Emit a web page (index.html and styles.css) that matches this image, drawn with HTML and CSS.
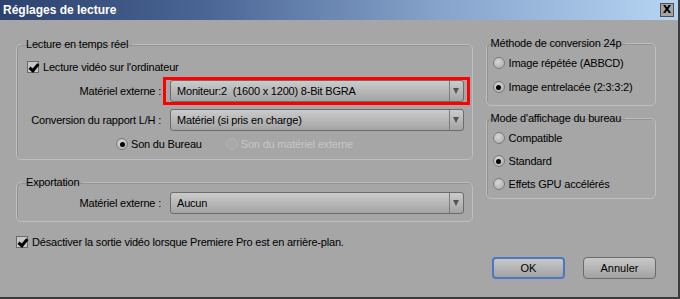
FILE: index.html
```html
<!DOCTYPE html>
<html lang="fr">
<head>
  <meta charset="UTF-8" />
  <title>Réglages de lecture</title>
  <link rel="stylesheet" href="styles.css">
</head>
<body>
  <div class="dialog">
    <div class="titlebar">
      <span class="title">Réglages de lecture</span>
      <span class="close">X</span>
    </div>
    <div class="content">
      <div class="columns">
        <div class="left">
          <fieldset class="group realtime">
            <legend>Lecture en temps réel</legend>
            <label class="check first"><span class="box on"></span>Lecture vidéo sur l'ordinateur</label>
            <div class="row">
              <span class="label">Matériel externe :</span>
              <div class="select highlight"><span class="value">Moniteur:2&nbsp; (1600 x 1200) 8-Bit BGRA</span><span class="arrow"></span></div>
            </div>
            <div class="row second">
              <span class="label">Conversion du rapport L/H :</span>
              <div class="select"><span class="value">Matériel (si pris en charge)</span><span class="arrow"></span></div>
            </div>
            <div class="radios">
              <label class="radio"><span class="dot on"></span>Son du Bureau</label>
              <label class="radio disabled"><span class="dot"></span>Son du matériel externe</label>
            </div>
          </fieldset>
          <fieldset class="group export">
            <legend>Exportation</legend>
            <div class="row">
              <span class="label">Matériel externe :</span>
              <div class="select"><span class="value">Aucun</span><span class="arrow"></span></div>
            </div>
          </fieldset>
        </div>
        <div class="right">
          <fieldset class="group side conversion">
            <legend>Méthode de conversion 24p</legend>
            <label class="radio"><span class="dot"></span>Image répétée (ABBCD)</label>
            <label class="radio"><span class="dot on"></span>Image entrelacée (2:3:3:2)</label>
          </fieldset>
          <fieldset class="group side desktop">
            <legend>Mode d'affichage du bureau</legend>
            <label class="radio"><span class="dot"></span>Compatible</label>
            <label class="radio"><span class="dot on"></span>Standard</label>
            <label class="radio"><span class="dot"></span>Effets GPU accélérés</label>
          </fieldset>
        </div>
      </div>
      <label class="check background"><span class="box on"></span>Désactiver la sortie vidéo lorsque Premiere Pro est en arrière-plan.</label>
      <div class="buttons">
        <button class="btn default">OK</button>
        <button class="btn">Annuler</button>
      </div>
    </div>
  </div>
</body>
</html>
```

FILE: styles.css
```css
* {
  box-sizing: border-box;
}

body {
  margin: 0;
  font-family: "Liberation Sans", Arial, sans-serif;
  font-size: 11px;
  letter-spacing: -0.2px;
  color: #000;
}

.dialog {
  width: 680px;
  height: 299px;
  background: #a6a6a6;
  border-right: 2px solid #3c3c3c;
  border-bottom: 2px solid #3c3c3c;
  display: flex;
  flex-direction: column;
}

.titlebar {
  height: 20px;
  background: linear-gradient(90deg, #2c416e 0%, #4a6594 30%, #86a4cc 65%, #b6d4f2 100%);
  display: flex;
  align-items: center;
  justify-content: space-between;
  padding: 0 4px 0 3px;
}

.title {
  color: #fff;
  font-weight: bold;
  font-size: 12px;
  letter-spacing: 0;
}

.close {
  width: 14px;
  height: 14px;
  background: #a4a4a4;
  border: 1px solid #505050;
  font-family: "DejaVu Sans", sans-serif;
  font-weight: bold;
  font-size: 11px;
  line-height: 12px;
  text-align: center;
}

.content {
  padding: 18px 22px 0 16px;
  display: flex;
  flex-direction: column;
}

.columns {
  display: flex;
  gap: 13px;
}

.left {
  width: 458px;
}

.right {
  width: 171px;
  margin-top: -1px;
}

.group {
  margin: 0;
  min-width: 0;
  border: 1px solid #bebebe;
  border-radius: 5px;
  box-shadow: inset 1px 1px 0 #939393;
  padding: 0 8px 8px 11px;
}

.group legend {
  padding: 0 4px;
  margin-left: -6px;
  line-height: 13px;
}

.check {
  display: flex;
  align-items: center;
  gap: 4px;
  height: 14px;
}

.box {
  width: 12px;
  height: 12px;
  border: 1px solid #6a6a6a;
  background: #c6c6c6;
  position: relative;
}

.box.on::after {
  content: "";
  position: absolute;
  left: 3px;
  top: 0;
  width: 3px;
  height: 7px;
  border-right: 3px solid #000;
  border-bottom: 3px solid #000;
  transform: rotate(40deg);
}

.realtime .first {
  margin: 9px 0 0 -1px;
}

.row {
  display: flex;
  align-items: center;
  margin-top: 6px;
}

.row.second {
  margin-top: 7px;
}

.label {
  width: 133px;
  text-align: right;
  white-space: nowrap;
  margin-right: 9px;
}

.select {
  flex: 1;
  display: flex;
  height: 22px;
  border: 1px solid #6c6c6c;
  border-radius: 3px;
  background: linear-gradient(#cbcbcb, #a4a4a4);
}

.select .value {
  flex: 1;
  padding-left: 6px;
  line-height: 20px;
}

.select .arrow {
  width: 14px;
  border-left: 1px solid #7c7c7c;
  display: flex;
  align-items: center;
  justify-content: center;
}

.select .arrow::before {
  content: "";
  border-left: 3px solid transparent;
  border-right: 3px solid transparent;
  border-top: 6px solid #555;
}

.highlight {
  position: relative;
}

.highlight::after {
  content: "";
  position: absolute;
  top: -4px;
  bottom: -4px;
  left: -8px;
  right: -7px;
  border: 3px solid #f00;
}

.radios {
  display: flex;
  gap: 24px;
  margin: 6px 0 0 88px;
}

.radio {
  display: flex;
  align-items: center;
  gap: 3px;
  height: 14px;
}

.dot {
  width: 12px;
  height: 12px;
  border-radius: 50%;
  border: 1px solid #7a7a7a;
  background: radial-gradient(circle at 40% 35%, #d6d6d6, #a8a8a8);
  display: flex;
  align-items: center;
  justify-content: center;
}

.dot.on::after {
  content: "";
  width: 5px;
  height: 5px;
  border-radius: 50%;
  background: #000;
}

.radio.disabled {
  color: #c6c6c6;
}

.radio.disabled .dot {
  border-color: #b4b4b4;
  background: #a9a9a9;
}

.export {
  margin-top: 16px;
  padding-bottom: 7px;
}

.export .row {
  margin-top: 3px;
}

.side {
  padding: 0 6px 0 6px;
}

.side .radio {
  gap: 4px;
}

.conversion {
  padding-bottom: 11px;
}

.conversion .radio {
  margin-top: 6px;
}

.conversion .radio + .radio {
  margin-top: 10px;
}

.desktop {
  margin-top: 6px;
  padding-bottom: 7px;
}

.desktop .radio {
  margin-top: 6px;
}

.desktop .radio + .radio {
  margin-top: 9px;
}

.background {
  margin-top: 13px;
}

.buttons {
  display: flex;
  justify-content: flex-end;
  gap: 18px;
  margin-top: 8px;
}

.btn {
  width: 73px;
  height: 22px;
  font-family: inherit;
  font-size: 11px;
  color: #000;
  border: 1px solid #6a6a6a;
  border-radius: 4px;
  background: linear-gradient(#c8c8c8, #a2a2a2);
  padding: 0;
}

.btn.default {
  border: 2px solid #4a78c4;
}
```
